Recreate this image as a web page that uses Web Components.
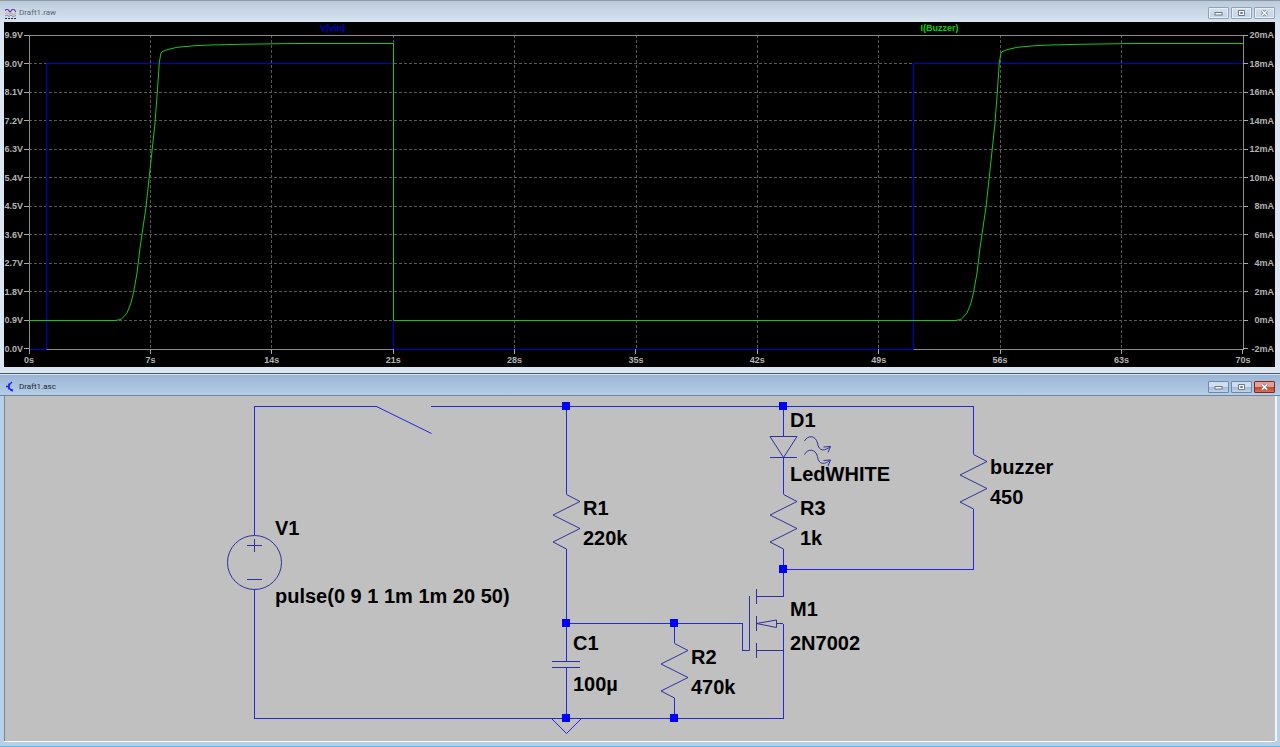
<!DOCTYPE html>
<html lang="en">
<head>
<meta charset="utf-8">
<title>Draft1</title>
<style>
  html { height: 100%; }
  body {
    margin: 0;
    min-height: 100%;
    display: grid;
    grid-template-rows: 1fr 1fr;
    gap: 1px;
    background: #4c5864;
    font-family: "Liberation Sans", Arial, sans-serif;
  }
</style>
</head>
<body>
<mdi-window caption="Draft1.raw">
  <svg slot="icon" width="11" height="11" viewBox="0 0 11 11" aria-hidden="true">
    <path d="M0 3 L1 1.5 H3 L4 3 L5 4 L6 3 L7 1.5 H9 L11 4" fill="none" stroke="#6a3fa8" stroke-width="1.2"/>
    <path d="M0 6 L2 4.5 L4 6.5 L6 5 L8 6.5 L11 5" fill="none" stroke="#d89a86"/>
    <path d="M0 8 L2 7 L4 8.5 L6 7 L8 8.5 L11 7.5" fill="none" stroke="#8a86a8"/>
    <path d="M0 10.5 H11" stroke="#28243c" stroke-dasharray="2 1"/>
  </svg>
  <waveform-plot></waveform-plot>
</mdi-window>
<mdi-window caption="Draft1.asc" active>
  <svg slot="icon" width="11" height="11" viewBox="0 0 11 11" aria-hidden="true">
    <path d="M1 5.5 H4 M4 2.5 V8.5" stroke="#1a1aff" stroke-width="1.6" fill="none"/>
    <path d="M4 4 L7 1 M4 7 L7.5 10" stroke="#1a1aff" stroke-width="1.3" fill="none"/>
    <path d="M8 10.5 L5 9.8 L7.4 7.6 Z" fill="#1a1aff"/>
  </svg>
  <circuit-schematic></circuit-schematic>
</mdi-window>

<script>
class MdiWindow extends HTMLElement {
  constructor() {
    super();
    this.attachShadow({ mode: 'open' }).innerHTML = `
      <style>
        :host {
          --glass: linear-gradient(#bccbdb, #d6e3f0);
          --frame: #dbe6f2;
          --ink: #5c6672;
          display: flex;
          flex-direction: column;
          box-sizing: border-box;
          min-width: 0;
          padding: 0 5px 6px 4px;
          background: var(--frame);
        }
        :host([active]) {
          --glass: linear-gradient(#9bb5d4, #b4cee8);
          --frame: #b7d0e9;
          --ink: #20262e;
          box-shadow: inset 0 -1px #56c4f0;
        }
        header {
          display: flex;
          align-items: center;
          gap: 3px;
          box-sizing: border-box;
          height: 22px;
          margin: 0 -5px 0 -4px;
          padding: 3px 5px 0;
          border-top: 1px solid #8b97a3;
          background: var(--glass);
        }
        :host([active]) header { border-top-color: #cfe0f0; border-bottom: 1px solid #74869a; }
        h2 {
          flex: 1;
          margin: 0;
          color: var(--ink);
          font: 8px/12px Roboto, "Noto Sans", sans-serif;
        }
        nav { display: flex; gap: 2px; }
        button {
          display: grid;
          place-items: center;
          box-sizing: border-box;
          width: 21px;
          height: 12px;
          padding: 0;
          border: 1px solid #93a1b5;
          border-radius: 1px;
          background: linear-gradient(#d5e1ee, #c4d2e2);
          box-shadow: inset 0 0 0 1px #e6eef6;
        }
        :host([active]) button {
          border-color: #6f87a8;
          background: linear-gradient(#cfdff0 45%, #a3bbd6 50%, #bcd3ea);
          box-shadow: none;
        }
        :host([active]) button.close {
          border-color: #7c2b22;
          background: linear-gradient(#e4a090 45%, #c4412c 50%, #dc7052);
        }
        main { flex: 1; display: grid; min-height: 0; }
        :host([active]) main { box-shadow: 0 1px #fff, 1px 0 #eef4fa, 2px 0 #eef4fa; }
      </style>
      <header>
        <slot name="icon"></slot>
        <h2></h2>
        <nav>
          <button type="button" aria-label="Minimize"><svg width="9" height="8" viewBox="0 0 9 8"><rect x="1" y="3.5" width="7" height="2.5" fill="#fff" stroke="#6d7886"/></svg></button>
          <button type="button" aria-label="Restore"><svg width="9" height="8" viewBox="0 0 9 8"><path d="M1.5 1.5h6v5h-6z" fill="#fff" stroke="#6d7886"/><path d="M3.5 3.5h2v1h-2z" fill="#fff" stroke="#6d7886"/></svg></button>
          <button type="button" class="close" aria-label="Close"><svg width="9" height="8" viewBox="0 0 9 8"><path d="M2 1.5l5 5M7 1.5l-5 5" stroke="#6d7886" stroke-width="3"/><path d="M2 1.5l5 5M7 1.5l-5 5" stroke="#fff" stroke-width="1.5"/></svg></button>
        </nav>
      </header>
      <main><slot></slot></main>`;
    this.shadowRoot.querySelector('h2').textContent = this.getAttribute('caption');
  }
}
customElements.define('mdi-window', MdiWindow);

class WaveformPlot extends HTMLElement {
  constructor() {
    super();
    const steps = n => Array.from({ length: n + 1 }, (_, i) => i);
    const spans = list => list.map(t => `<span>${t}</span>`).join('');
    const volts = steps(11).map(i => ((99 - 9 * i) / 10).toFixed(1) + 'V');
    const amps = steps(11).map(i => (20 - 2 * i) + 'mA');
    const secs = steps(10).map(i => 7 * i + 's');
    const rows = steps(11).slice(1, -1).map(i => `<line x1="0" x2="100%" y1="${i * 100 / 11}%" y2="${i * 100 / 11}%"/>`).join('');
    const cols = steps(10).slice(1, -1).map(i => `<line y1="0" y2="100%" x1="${i * 10}%" x2="${i * 10}%"/>`).join('');
    // Turn-on edge of the buzzer current; it repeats for each pulse
    const edge = [[115,320.5],[121,319.5],[127,313],[131,303],[134,290],[137,273],[140,248],[146,207],[150,170],[155,123],[157.3,92],[159.3,63],[160.7,54],[162,51.7],[167,49.7],[177,47.3],[195,45.7],[210,45],[240,44.3],[293,43.5]];
    const rise = dx => edge.map(([x, y]) => `L${x + dx} ${y}`).join('');
    this.attachShadow({ mode: 'open' }).innerHTML = `
      <style>
        :host {
          display: grid;
          grid-template: 13px 1fr 18px / 25px 1fr 32px;
          background: #000;
          color: #b4b4b4;
          font-weight: bold;
          font-size: 9px;
          line-height: 12px;
        }
        .legend { grid-area: 1 / 2; display: grid; grid-template-columns: 1fr 1fr; text-align: center; }
        .v { color: #0000d0; }
        .i { color: #00d400; }
        svg { display: block; width: 100%; height: 100%; overflow: visible; }
        .plot { grid-area: 2 / 2; min-height: 0; contain: size; }
        .grid line { stroke: #585858; stroke-dasharray: 3 2; shape-rendering: crispEdges; }
        .axis { fill: none; stroke: #8c8c8c; shape-rendering: crispEdges; vector-effect: non-scaling-stroke; }
        .trace { fill: none; vector-effect: non-scaling-stroke; }
        .y { display: flex; flex-direction: column; justify-content: space-between; margin: -6px 0; }
        .y span { display: flex; align-items: center; }
        .y span::before, .y span::after { height: 1px; background: #a8a8a8; }
        .left { grid-area: 2 / 1; }
        .left span { justify-content: flex-end; gap: 1px; }
        .left span::after { content: ""; width: 5px; }
        .right { grid-area: 2 / 3; }
        .right span { justify-content: space-between; padding-right: 1px; }
        .right span::before { content: ""; width: 5px; }
        .x { grid-area: 3 / 2; display: flex; justify-content: space-between; margin: 0 -20px; }
        .x span { display: grid; justify-items: center; grid-template-rows: 5px 12px; width: 40px; }
        .x span::before { content: ""; width: 1px; background: #a8a8a8; }
      </style>
      <div class="legend"><span class="v">V(vin)</span><span class="i">I(Buzzer)</span></div>
      <div class="y left">${spans(volts)}</div>
      <div class="plot">
        <svg role="img" aria-label="Input voltage and buzzer current over 70 seconds">
          <g class="grid">${rows}${cols}</g>
          <svg viewBox="29 35 1214 314" preserveAspectRatio="none">
            <path class="axis" d="M29.5 35.5H1243.5V349.5H29.5Z"/>
            <path class="trace" stroke="#0000dc" d="M29.5 349.5H46.5V63.5H393.5V349.5H913.5V63.5H1243"/>
            <path class="trace" stroke="#18c818" d="M29.5 320.5${rise(0)}H393.5V320.5${rise(840)}H1243"/>
          </svg>
        </svg>
      </div>
      <div class="y right">${spans(amps)}</div>
      <div class="x">${spans(secs)}</div>`;
  }
}
customElements.define('waveform-plot', WaveformPlot);

class CircuitSchematic extends HTMLElement {
  constructor() {
    super();
    const resistor = (x, y) => `<path d="M${x} ${y}l13.5 7l-27 13.5l27 13.5l-27 13.5l13.5 7"/>`;
    const nodes = [[562,402],[779,402],[779,565],[562,619],[670,619],[562,714],[670,714]]
      .map(([x, y]) => `<rect x="${x}" y="${y}" width="8" height="8"/>`).join('');
    const labels = [
      [275,535,'V1'],[275,603,'pulse(0 9 1 1m 1m 20 50)'],
      [583,515,'R1'],[583,545,'220k'],[573,650,'C1'],[573,691,'100µ'],
      [691,664,'R2'],[691,694,'470k'],[790,427,'D1'],[790,481,'LedWHITE'],
      [800,515,'R3'],[800,545,'1k'],[990,474,'buzzer'],[990,504,'450'],
      [790,616,'M1'],[790,650,'2N7002']
    ].map(([x, y, t]) => `<text x="${x}" y="${y}">${t}</text>`).join('');
    const ray = y => `<path d="M804.5 ${y}c3 -6 11 -6 13 2c1 9 8 8 13 3.5m-7 .5l7 -.5l-2.5 6"/>`;
    this.attachShadow({ mode: 'open' }).innerHTML = `
      <style>
        :host { display: block; background: #c0c0c0; box-shadow: inset 1px 0 #7c8694; min-height: 0; contain: size; }
        svg { display: block; width: 100%; height: 100%; }
        .wires { fill: none; stroke: #2424e4; shape-rendering: crispEdges; }
        .parts { fill: none; stroke: #30309c; }
        .nodes { fill: #0000ff; }
        text { font-size: 20px; font-weight: bold; fill: #000; }
      </style>
      <svg viewBox="4 396 1271 345" role="group" aria-label="Delayed buzzer circuit">
        <g class="wires">
          <path d="M254.5 535V406.5H376.5M430.5 406.5H973.5V454M973.5 509V569.5H783.5M254.5 589V718.5H783.5V623.5"/>
          <path d="M566.5 406V494M566.5 549V661M566.5 668V718M783.5 406V436M783.5 457V494M783.5 549V596.5"/>
          <path d="M566.5 623.5H742.5V650.5M674.5 623V643M674.5 698V718"/>
        </g>
        <g class="parts">
          <path stroke="#2424e4" d="M376.5 406.5L431.5 433.5M551.5 718.5L566.5 733.5L581.5 718.5"/>
          <circle cx="254.5" cy="562.5" r="27"/>
          <path d="M254.5 539V552M247 545.5H262M247 579.5H262"/>
          ${resistor(566.5, 494.5)}${resistor(783.5, 494.5)}${resistor(674.5, 643.5)}${resistor(973.5, 454.5)}
          <path d="M552 661.5H580M552 667.5H580"/>
          <path d="M770 436.5H797L783.5 457.5ZM770 457.5H797"/>
          ${ray(441)}${ray(454.5)}
          <path d="M742.5 650.5H749.5V596M756.5 589V604M756.5 616V631M756.5 643V658M756.5 596.5H783M756.5 650.5H783M756.5 623.5L776.5 620V627.5ZM776.5 623.5H783"/>
        </g>
        <g class="nodes">${nodes}</g>
        ${labels}
      </svg>`;
  }
}
customElements.define('circuit-schematic', CircuitSchematic);
</script>
</body>
</html>
